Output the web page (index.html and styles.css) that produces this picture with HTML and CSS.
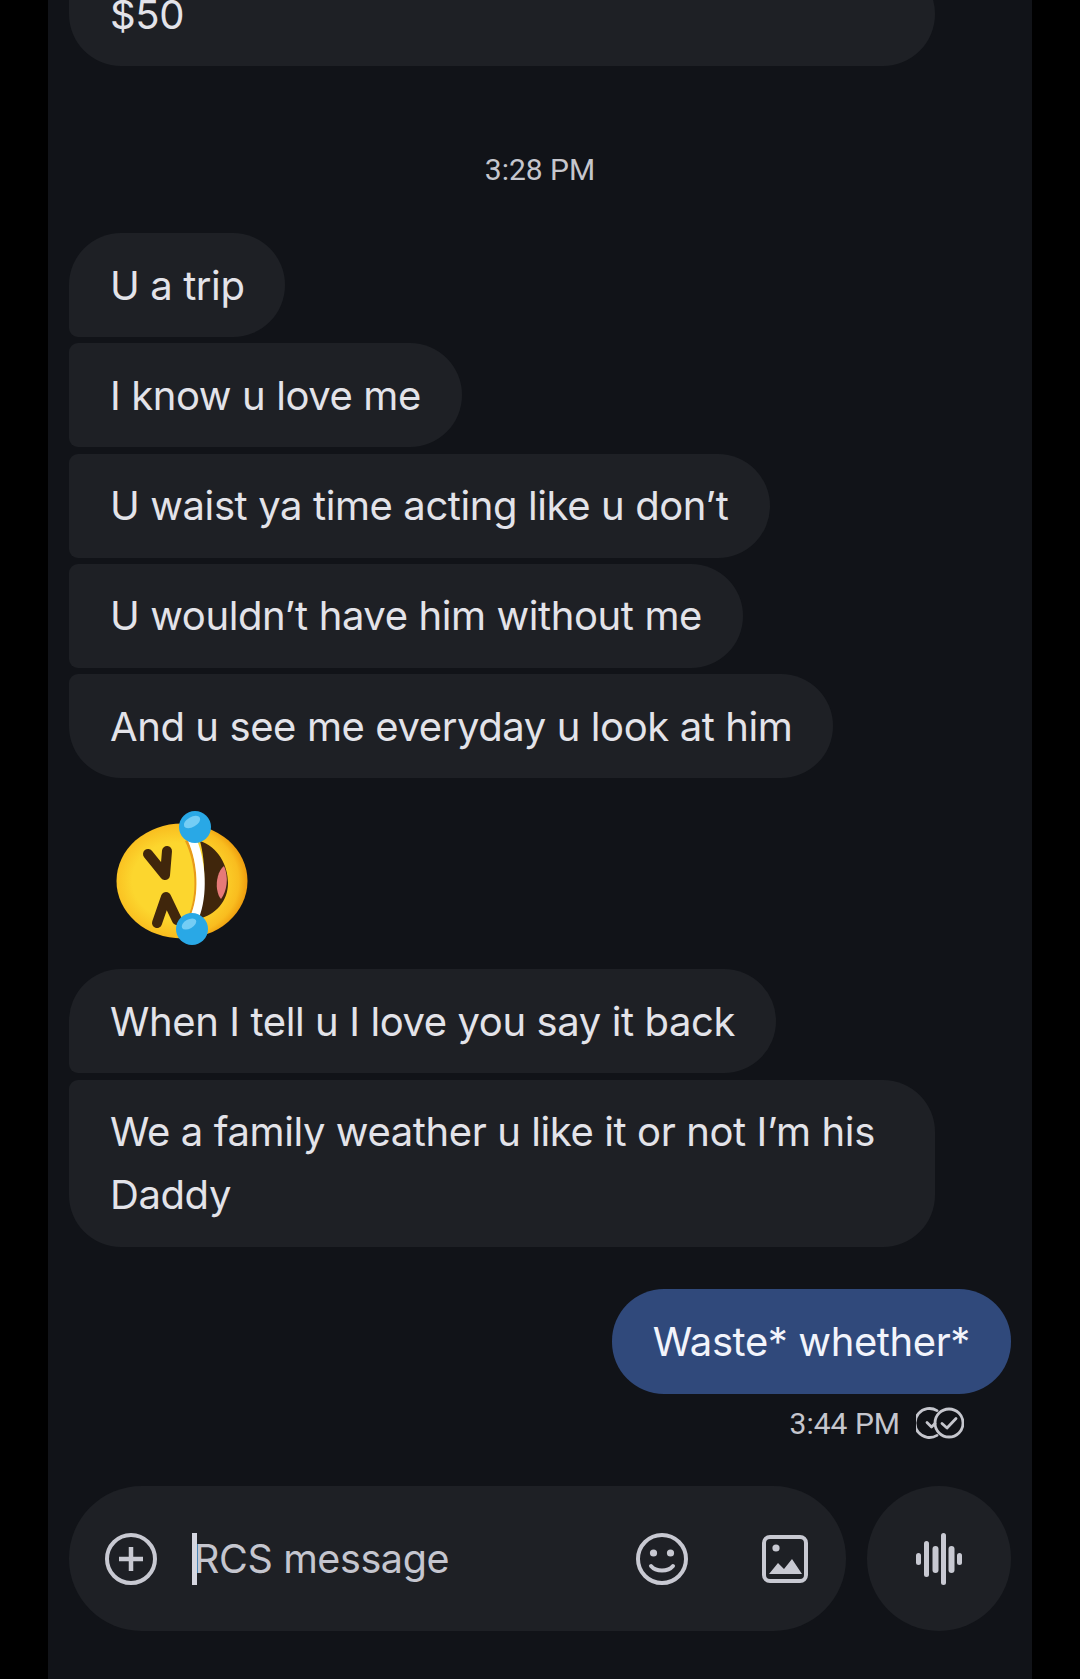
FILE: index.html
```html
<!DOCTYPE html>
<html lang="en">
<head>
    <meta charset="UTF-8">
    <title>Messages</title>
    <link rel="stylesheet" href="styles.css">
</head>
<body>
<main class="panel">
    <section class="thread">
        <div class="bubble bubble-wide last">$50</div>
        <div class="stamp">3:28 PM</div>
        <div class="group">
            <div class="bubble first">U a trip</div>
            <div class="bubble mid">I know u love me</div>
            <div class="bubble mid">U waist ya time acting like u don’t</div>
            <div class="bubble mid">U wouldn’t have him without me</div>
            <div class="bubble last">And u see me everyday u look at him</div>
        </div>
        <div class="emoji">
            <svg width="180" height="170" viewBox="0 0 180 170">
                <defs>
                    <radialGradient id="face" cx="0.45" cy="0.5" r="0.55">
                        <stop offset="0.6" stop-color="#fcd62e"/>
                        <stop offset="0.88" stop-color="#f9bd1f"/>
                        <stop offset="1" stop-color="#ee9c0e"/>
                    </radialGradient>
                </defs>
                <ellipse cx="92" cy="90" rx="65.5" ry="57.5" fill="url(#face)"/>
                <path d="M110 50 C128 56 138 74 138 92 C138 110 126 124 108 128 C116 104 116 72 110 50 Z" fill="#40260c"/>
                <path d="M134 75 C128 80 126 90 127 98 C128 103 129 106 131 108 C137 100 139 86 134 75 Z" fill="#e67a78"/>
                <path d="M95 50 C106 72 108 104 98 126 L100 127 C110 104 108 72 98 49 Z" fill="#e89a1a"/>
                <path d="M98 50 C108 72 110 104 100 126 L109 127 C118 104 116 72 107 49 Z" fill="#fff"/>
                <path d="M58 63 L75 84 L77 60" fill="none" stroke="#40260c" stroke-width="10" stroke-linecap="round" stroke-linejoin="round"/>
                <path d="M67 132 L76 106 L87 129" fill="none" stroke="#40260c" stroke-width="10" stroke-linecap="round" stroke-linejoin="round"/>
                <circle cx="105" cy="36" r="16" fill="#29a8e6"/>
                <ellipse cx="102" cy="31" rx="9" ry="5" transform="rotate(-30 102 31)" fill="#74cdf5"/>
                <circle cx="102" cy="138" r="16" fill="#29a8e6"/>
                <ellipse cx="99" cy="133" rx="8" ry="4.5" transform="rotate(-30 99 133)" fill="#74cdf5"/>
            </svg>
        </div>
        <div class="group">
            <div class="bubble first">When I tell u I love you say it back</div>
            <div class="bubble last">We a family weather u like it or not I’m his Daddy</div>
        </div>
        <div class="bubble outgoing">Waste* whether*</div>
        <div class="meta">
            <span>3:44 PM</span>
            <svg width="48" height="32" viewBox="0 0 48 32" fill="none" stroke="#c5c6cd" stroke-width="2.8" stroke-linecap="round" stroke-linejoin="round">
                <path d="M21 3.6 A14.5 14.5 0 1 0 21 28.4"/>
                <circle cx="33" cy="16" r="14"/>
                <path d="M11 15.5 L15.5 20 L19 16.5"/>
                <path d="M26 16.5 L31 21 L40 11.5"/>
            </svg>
        </div>
    </section>

    <footer class="composer">
        <div class="input-bar">
            <svg class="icon" width="52" height="52" viewBox="0 0 52 52" fill="none" stroke="#c8c9d2" stroke-width="4">
                <circle cx="26" cy="26" r="24"/>
                <path d="M26 14 V38 M14 26 H38" stroke-width="4.5"/>
            </svg>
            <span class="cursor"></span>
            <span class="placeholder">RCS message</span>
            <svg class="icon smile" width="52" height="52" viewBox="0 0 52 52" fill="none" stroke="#c8c9d2" stroke-width="4">
                <circle cx="26" cy="26" r="24"/>
                <circle cx="17.5" cy="20" r="3.6" fill="#c8c9d2" stroke="none"/>
                <circle cx="34.5" cy="20" r="3.6" fill="#c8c9d2" stroke="none"/>
                <path d="M15 33 C20 39 32 39 37 33" stroke-linecap="round"/>
            </svg>
            <svg class="icon" width="52" height="52" viewBox="0 0 52 52">
                <rect x="5" y="4" width="42" height="44" rx="6" fill="none" stroke="#c8c9d2" stroke-width="4"/>
                <circle cx="17" cy="15" r="3.6" fill="#c8c9d2"/>
                <path d="M10 41 L19 30 L25 36 L33 26 L43 41 Z" fill="#c8c9d2"/>
            </svg>
        </div>
        <button class="mic" type="button">
            <svg width="46" height="52" viewBox="0 0 46 52" fill="#c8c9d2">
                <rect x="0" y="20" width="5" height="12" rx="2.5"/>
                <rect x="8" y="8" width="5" height="36" rx="2.5"/>
                <rect x="16.5" y="13" width="6" height="27" rx="3"/>
                <rect x="25" y="0" width="5" height="52" rx="2.5"/>
                <rect x="32.5" y="13" width="6" height="27" rx="3"/>
                <rect x="41" y="20" width="5" height="12" rx="2.5"/>
            </svg>
        </button>
    </footer>
</main>
</body>
</html>
```

FILE: styles.css
```css
* {
    margin: 0;
    padding: 0;
    box-sizing: border-box;
}
body {
    background: #000;
    height: 1679px;
    overflow: hidden;
    font-family: Roboto, "Liberation Sans", sans-serif;
}
.panel {
    width: 984px;
    height: 1679px;
    margin-left: 48px;
    padding: 0 21px 48px;
    background: #111318;
    display: flex;
    flex-direction: column;
    overflow: hidden;
}
.thread {
    flex: 1;
    min-height: 0;
    display: flex;
    flex-direction: column;
    justify-content: flex-end;
    align-items: flex-start;
}
.group {
    display: flex;
    flex-direction: column;
    align-items: flex-start;
    gap: 6.2px;
}
.bubble {
    flex-shrink: 0;
    max-width: 866px;
    padding: 20.5px 41px;
    background: #1e2025;
    color: #e3e3e9;
    font-family: Inter, sans-serif;
    font-size: 40px;
    letter-spacing: -0.4px;
    line-height: 63px;
    border-radius: 52px;
}
.bubble-wide {
    width: 866px;
}
.first {
    border-bottom-left-radius: 9px;
}
.mid {
    border-top-left-radius: 9px;
    border-bottom-left-radius: 9px;
}
.last {
    border-top-left-radius: 9px;
}
.stamp {
    flex-shrink: 0;
    align-self: center;
    margin: 84px 0 43px;
    color: #c5c6cd;
    font-size: 30px;
    line-height: 40px;
}
.emoji {
    flex-shrink: 0;
    display: flex;
    margin: 13px 0 8.3px 21px;
}
.outgoing {
    align-self: flex-end;
    margin-top: 42px;
    padding: 21px 41px;
    background: #30497b;
    color: #f2f4fb;
}
.meta {
    flex-shrink: 0;
    align-self: flex-end;
    display: flex;
    align-items: center;
    gap: 16px;
    height: 40px;
    margin: 9.5px 47px 43px 0;
    color: #c5c6cd;
    font-size: 30px;
}
.composer {
    flex-shrink: 0;
    display: flex;
    gap: 21px;
}
.input-bar {
    flex: 1;
    height: 145px;
    padding: 0 35px 0 36px;
    background: #1e2025;
    border-radius: 73px;
    display: flex;
    align-items: center;
}
.icon {
    flex-shrink: 0;
}
.cursor {
    width: 5px;
    height: 52px;
    margin-left: 35px;
    background: #d5d6e0;
}
.placeholder {
    margin-left: -3px;
    color: #c5c6cf;
    font-family: Inter, sans-serif;
    font-size: 39.5px;
    letter-spacing: -0.4px;
}
.smile {
    margin-left: auto;
    margin-right: 71px;
}
.mic {
    width: 144px;
    height: 145px;
    border: none;
    border-radius: 50%;
    background: #1e2025;
    display: flex;
    align-items: center;
    justify-content: center;
}
```
